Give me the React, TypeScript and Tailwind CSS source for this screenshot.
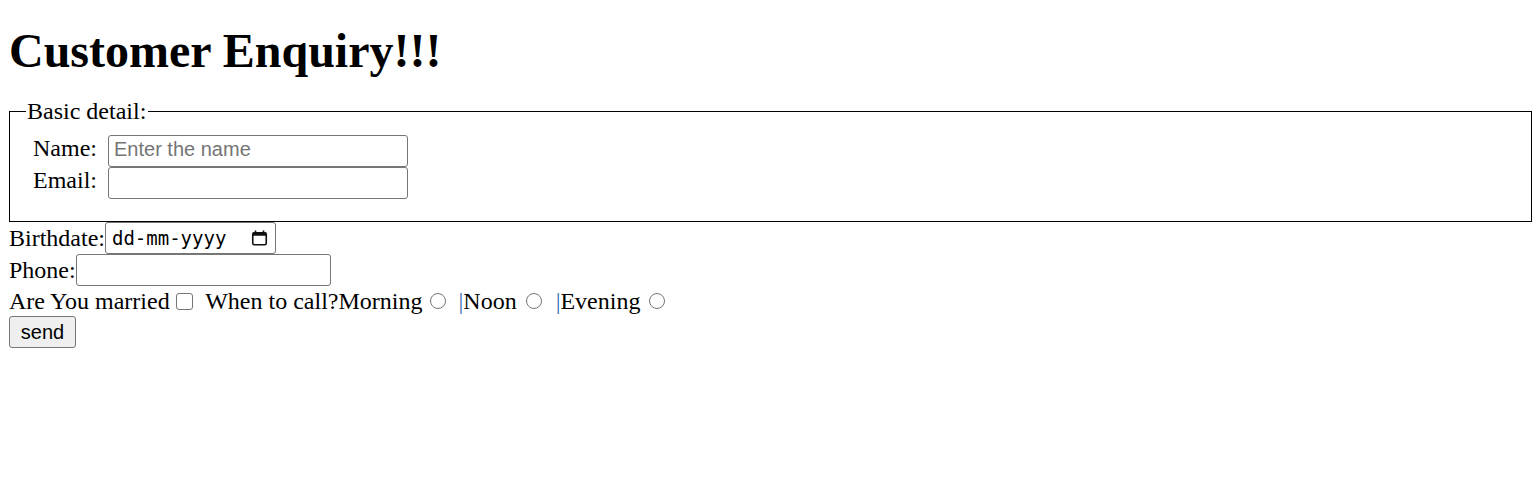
import React from "react";

const serif = "font-['Liberation_Serif','Times_New_Roman',serif]";
const sans = "font-['Liberation_Sans',Arial,sans-serif]";

const CalendarIcon = () => (
  <svg width="17" height="16" viewBox="0 0 17 16" fill="none" className="shrink-0">
    <rect x="1.75" y="2.75" width="13.5" height="12" rx="1.5" stroke="#111" strokeWidth="1.6" />
    <rect x="1.75" y="2.75" width="13.5" height="3" fill="#111" />
    <path d="M4.5 0.5V3M12.5 0.5V3" stroke="#111" strokeWidth="1.6" />
  </svg>
);

const Radio = ({ className = "" }: { className?: string }) => (
  <input
    type="radio"
    name="when"
    className={`appearance-none w-[16px] h-[16px] rounded-full border border-[#767676] bg-white ${className}`}
  />
);

export default function App() {
  return (
    <div className={`${serif} text-[24px] text-black pl-2 pr-1 pt-[23px] bg-white min-h-[477px]`}>
      <h1 className="text-[48px] font-bold leading-[56px] pl-px">Customer Enquiry!!!</h1>

      <fieldset className="mt-[18px] ml-px border border-black pl-[16px] pt-[10px] pb-[22px]">
        <legend className="pl-px pr-[2px] leading-[28px]">Basic detail:</legend>
        {[
          { label: "Name:", placeholder: "Enter the name" },
          { label: "Email:", placeholder: "" },
        ].map((row) => (
          <div key={row.label} className="flex items-start h-[32px]">
            <label className="w-[82px] pl-[7px] leading-[28px] -mt-px">{row.label}</label>
            <input
              type="text"
              placeholder={row.placeholder}
              className={`${sans} box-border w-[300px] h-[32px] text-[20px] pl-[5px] pr-[5px] pt-0 pb-[4px] border border-[#767676] rounded-[3px] placeholder:text-[#757575] outline-none`}
            />
          </div>
        ))}
      </fieldset>

      <div className="flex items-center h-[32px]">
        <span className="leading-[32px] pl-px">Birthdate:</span>
        <div className="box-border w-[171px] h-[32px] flex items-center justify-between pl-[6px] pr-[7px] border border-[#767676] rounded-[3px]">
          <span className="font-['DejaVu_Sans_Mono','Liberation_Mono',monospace] text-[19px] leading-none">dd-mm-yyyy</span>
          <CalendarIcon />
        </div>
      </div>

      <div className="flex items-center h-[32px]">
        <span className="leading-[32px] pl-px">Phone:</span>
        <input
          type="tel"
          className={`${sans} box-border w-[255px] h-[32px] text-[20px] px-[5px] border border-[#767676] rounded-[3px] outline-none`}
        />
      </div>

      <div className="flex items-center h-[30px] leading-[30px] whitespace-pre pl-px">
        <span>Are You married</span>
        <input
          type="checkbox"
          className="appearance-none w-[17px] h-[17px] ml-[6px] mr-[7px] rounded-[3px] border border-[#767676] bg-white"
        />
        <span> When to call?Morning</span>
        <Radio className="ml-[8px] mr-[6px]" />
        <span> </span>
        <span className="text-[#2f6db5]">|</span>
        <span>Noon</span>
        <Radio className="ml-[9px] mr-[8px]" />
        <span> </span>
        <span className="text-[#2f6db5]">|</span>
        <span>Evening</span>
        <Radio className="ml-[9px]" />
      </div>

      <button
        className={`${sans} block box-border w-[67px] h-[32px] ml-px text-[20px] bg-[#efefef] border border-[#767676] rounded-[3px]`}
      >
        send
      </button>
    </div>
  );
}
